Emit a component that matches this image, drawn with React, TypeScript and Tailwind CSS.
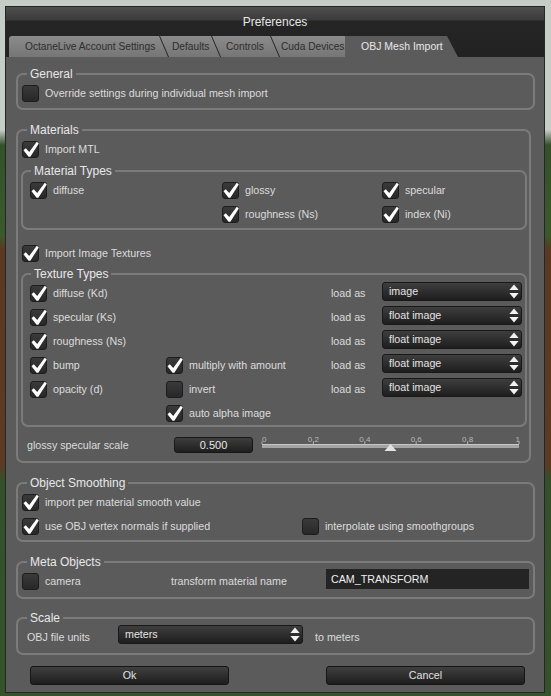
import React from "react";

function CheckBox({ on }: { on?: boolean }) {
  return (
    <span className="relative block w-[17px] h-[17px] shrink-0 rounded-[3px] border border-[#1c1c1c] bg-[linear-gradient(to_bottom,#3a3a3a,#282828)]">
      {on && (
        <svg viewBox="0 0 17 17" className="absolute left-[-1px] top-[-1px] w-[17px] h-[17px]">
          <path d="M1.5 9.3 L3.8 7.2 L7.2 11 L14.8 0.8 L16.8 2.4 L8.3 15.8 L6.6 15.8 Z" fill="#ffffff" />
        </svg>
      )}
    </span>
  );
}

function Opt({ on, label }: { on?: boolean; label: string }) {
  return (
    <div className="flex items-center gap-[6px] h-6 whitespace-nowrap">
      <CheckBox on={on} />
      <span>{label}</span>
    </div>
  );
}

function Arrows() {
  return (
    <svg viewBox="0 0 10 15" className="w-[10px] h-[15px] shrink-0">
      <path d="M5 0.5 L9.6 6 L0.4 6 Z" fill="#f2f2f2" />
      <path d="M0.4 9 L9.6 9 L5 14.5 Z" fill="#f2f2f2" />
    </svg>
  );
}

function Select({ value, className }: { value: string; className: string }) {
  return (
    <div
      className={
        "flex items-center justify-between h-[19px] rounded-[3px] border border-[#181818] bg-[linear-gradient(to_bottom,#3e3e3e,#1e1e1e)] pl-[6px] pr-[2px] text-[#e4e4e4] " +
        className
      }
    >
      <span>{value}</span>
      <Arrows />
    </div>
  );
}

function Group({
  title,
  className,
  legendClass,
  children,
}: {
  title: string;
  className: string;
  legendClass: string;
  children: React.ReactNode;
}) {
  return (
    <fieldset className={"border-2 border-[#7b7b7b] rounded-[7px] " + className}>
      <legend className={"px-[3px] text-[12px] leading-[14px] text-[#e8e8e8] " + legendClass}>{title}</legend>
      {children}
    </fieldset>
  );
}

function Slider() {
  const w = 257;
  const ticks = [0, 0.2, 0.4, 0.6, 0.8, 1];
  return (
    <svg width={w + 2} height={24} className="shrink-0">
      {ticks.map((t, i) => {
        const x = 1 + t * w;
        const anchor = i === 0 ? "start" : i === ticks.length - 1 ? "end" : "middle";
        return (
          <g key={t}>
            <line x1={x} y1={8.5} x2={x} y2={11} stroke="#b4b4b4" strokeWidth={1} />
            <text
              x={i === ticks.length - 1 ? x + 1 : x}
              y={8.5}
              textAnchor={anchor}
              fontSize={8}
              fill="#b8b8b8"
              fontFamily="'Liberation Sans', Arial, sans-serif"
            >
              {String(t)}
            </text>
          </g>
        );
      })}
      <rect x={1} y={11} width={w} height={4} fill="#a4a4a4" />
      <rect x={1} y={11} width={w} height={1} fill="#c6c6c6" />
      <polygon points={`${1 + 0.5 * w},11 ${7 + 0.5 * w},18 ${-5 + 0.5 * w},18`} fill="#e2e2e2" />
    </svg>
  );
}

const inactiveTab =
  "flex items-center whitespace-nowrap overflow-hidden text-[10.2px] text-[#2e2e2e] bg-[linear-gradient(to_bottom,#8b8b8b,#767676)]";

export default function App() {
  return (
    <div className="w-full h-[696px] overflow-hidden pt-[6px] pl-[5px] bg-[linear-gradient(to_bottom,#c6ccc6_0px,#c6ccc6_130px,#34512a_145px,#3a5a2c_235px,#5a3822_250px,#5c3a24_465px,#33502a_480px,#35532b_696px)] font-['Liberation_Sans',Arial,sans-serif] text-[10.7px] text-[#dcdcdc]">
      <div className="w-[540px] h-[687px] border border-[#262626] bg-[#5b5b5b] flex flex-col">
        {/* title + tabs */}
        <div className="bg-[linear-gradient(to_bottom,#4f4f4f_0px,#3b3b3b_13px,#252525_14px,#222222_50px)]">
          <div className="h-[29px] flex items-center justify-center text-[12px] text-[#e6e6e6]">Preferences</div>
          <div className="flex h-[21px] pl-[3px]">
            <div
              className={
                inactiveTab +
                " w-[159px] pl-[16px] rounded-tl-[3px] [clip-path:polygon(0_0,calc(100%-9px)_0,100%_100%,0_100%)]"
              }
            >
              OctaneLive Account Settings
            </div>
            <div
              className={
                inactiveTab +
                " ml-[-8px] w-[60px] pl-[12px] [clip-path:polygon(0_0,calc(100%-9px)_0,100%_100%,9px_100%)]"
              }
            >
              Defaults
            </div>
            <div
              className={
                inactiveTab +
                " ml-[-8px] w-[67px] pl-[14px] [clip-path:polygon(0_0,calc(100%-9px)_0,100%_100%,9px_100%)]"
              }
            >
              Controls
            </div>
            <div
              className={
                inactiveTab +
                " ml-[-8px] w-[90px] pl-[10px] [clip-path:polygon(0_0,calc(100%-9px)_0,100%_100%,9px_100%)]"
              }
            >
              Cuda Devices
            </div>
            <div className="relative z-10 ml-[-16px] w-[113px] pl-[16px] flex items-center whitespace-nowrap text-[10.5px] bg-[#5b5b5b] text-[#e8e8e8] [clip-path:polygon(0_0,calc(100%-11px)_0,100%_100%,0_100%)]">
              OBJ Mesh Import
            </div>
          </div>
        </div>

        {/* General */}
        <Group title="General" className="mt-[10px] ml-[10px] mr-[9px] px-[4px] pb-[3px]" legendClass="ml-[5px]">
          <Opt label="Override settings during individual mesh import" />
        </Group>

        {/* Materials */}
        <Group title="Materials" className="mt-[13px] ml-[10px] mr-[13px] pl-[2px] pb-[4px]" legendClass="ml-[7px]">
          <div className="pl-[2px]">
            <Opt on label="Import MTL" />
          </div>
          <Group
            title="Material Types"
            className="mt-[3px] ml-[1px] mr-[2px] pl-[7px] pb-[2px]"
            legendClass="ml-[1px]"
          >
            <div className="grid grid-cols-[192px_160px_1fr]">
              <Opt on label="diffuse" />
              <Opt on label="glossy" />
              <Opt on label="specular" />
              <div />
              <Opt on label="roughness (Ns)" />
              <Opt on label="index (Ni)" />
            </div>
          </Group>
          <div className="pl-[2px] mt-[11px]">
            <Opt on label="Import Image Textures" />
          </div>
          <Group title="Texture Types" className="mt-[2px] ml-[1px] mr-[2px] pl-[7px]" legendClass="ml-[1px]">
            <div className="grid grid-cols-[136px_165px_51px_140px]">
              <Opt on label="diffuse (Kd)" />
              <div />
              <div className="flex items-center h-6">load as</div>
              <div className="h-6 pt-[1px]">
                <Select value="image" className="w-[140px]" />
              </div>

              <Opt on label="specular (Ks)" />
              <div />
              <div className="flex items-center h-6">load as</div>
              <div className="h-6 pt-[1px]">
                <Select value="float image" className="w-[140px]" />
              </div>

              <Opt on label="roughness (Ns)" />
              <div />
              <div className="flex items-center h-6">load as</div>
              <div className="h-6 pt-[1px]">
                <Select value="float image" className="w-[140px]" />
              </div>

              <Opt on label="bump" />
              <Opt on label="multiply with amount" />
              <div className="flex items-center h-6">load as</div>
              <div className="h-6 pt-[1px]">
                <Select value="float image" className="w-[140px]" />
              </div>

              <Opt on label="opacity (d)" />
              <Opt label="invert" />
              <div className="flex items-center h-6">load as</div>
              <div className="h-6 pt-[1px]">
                <Select value="float image" className="w-[140px]" />
              </div>

              <div />
              <Opt on label="auto alpha image" />
              <div />
              <div />
            </div>
          </Group>
          <div className="mt-[6px] h-6 flex items-center pl-[7px]">
            <span className="w-[147px] shrink-0">glossy specular scale</span>
            <div className="w-[79px] h-[16px] shrink-0 flex items-center justify-center rounded-[3px] border border-[#171717] bg-[linear-gradient(to_bottom,#3e3e3e,#1e1e1e)] text-[11px] text-[#e8e8e8]">
              0.500
            </div>
            <div className="ml-[8px]">
              <Slider />
            </div>
          </div>
        </Group>

        {/* Object Smoothing */}
        <Group title="Object Smoothing" className="mt-[13px] ml-[10px] mr-[9px] px-[4px] pb-[2px]" legendClass="ml-[5px]">
          <div className="grid grid-cols-[280px_1fr]">
            <Opt on label="import per material smooth value" />
            <div />
            <Opt on label="use OBJ vertex normals if supplied" />
            <Opt label="interpolate using smoothgroups" />
          </div>
        </Group>

        {/* Meta Objects */}
        <Group title="Meta Objects" className="mt-[13px] ml-[10px] mr-[9px] px-[4px] pb-[4px]" legendClass="ml-[5px]">
          <div className="flex items-center h-6">
            <div className="w-[149px] shrink-0">
              <Opt label="camera" />
            </div>
            <span className="w-[155px] shrink-0 whitespace-nowrap">transform material name</span>
            <div className="flex-1 h-[20px] mb-[4px] bg-[#242424] flex items-center pl-[5px] text-[#f0f0f0]">
              CAM_TRANSFORM
            </div>
          </div>
        </Group>

        {/* Scale */}
        <Group title="Scale" className="mt-[12px] ml-[10px] mr-[9px] px-[4px] pb-[4px]" legendClass="ml-[5px]">
          <div className="flex items-center h-6 pl-[5px]">
            <span className="w-[91px] shrink-0">OBJ file units</span>
            <Select value="meters" className="w-[185px] self-start" />
            <span className="ml-[12px]">to meters</span>
          </div>
        </Group>

        {/* Buttons */}
        <div className="mt-[11px] ml-[24px] flex gap-[97px]">
          <button className="w-[199px] h-[19px] rounded-[3px] border border-[#151515] bg-[linear-gradient(to_bottom,#404040,#1d1d1d)] text-[#e2e2e2]">
            Ok
          </button>
          <button className="w-[199px] h-[19px] rounded-[3px] border border-[#151515] bg-[linear-gradient(to_bottom,#404040,#1d1d1d)] text-[#e2e2e2]">
            Cancel
          </button>
        </div>
      </div>
    </div>
  );
}
